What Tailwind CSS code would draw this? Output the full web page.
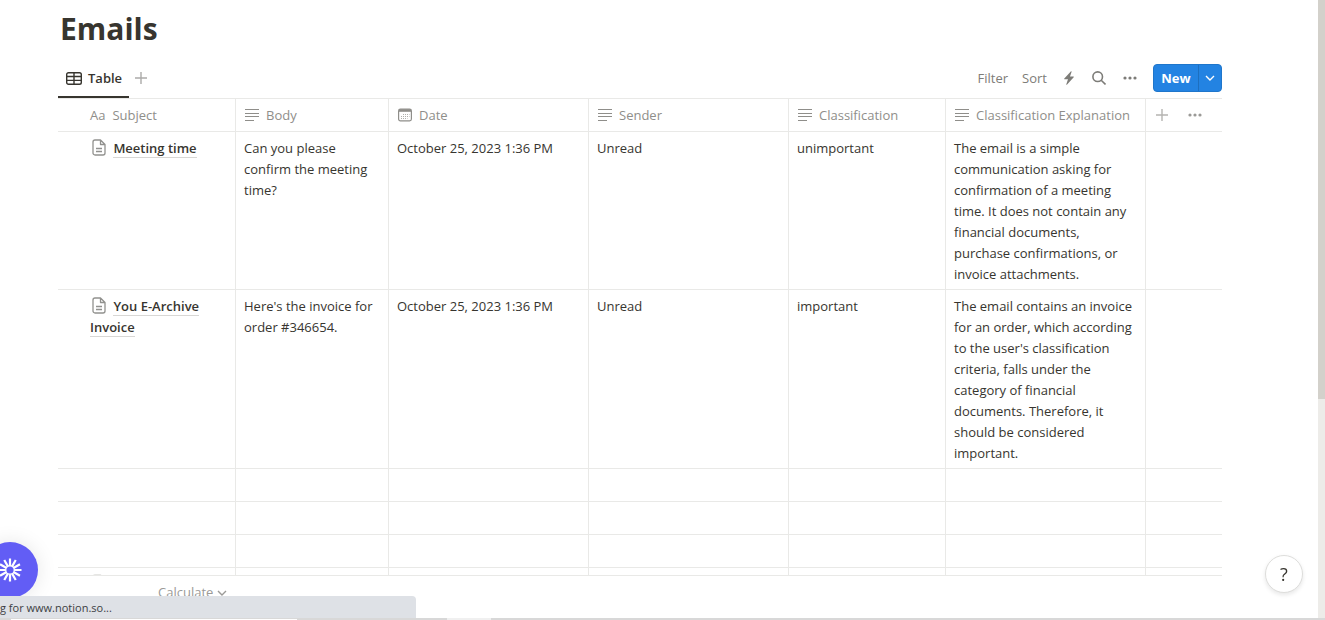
<!DOCTYPE html>
<html lang="en">
<head>
    <meta charset="UTF-8">
    <meta name="viewport" content="width=device-width, initial-scale=1.0">
    <title>Emails</title>
    <script src="https://cdn.jsdelivr.net/npm/@tailwindcss/browser@4"></script>
</head>
<body class="bg-white text-[#37352f] font-['Open_Sans','Noto_Sans',sans-serif] text-[13px] leading-[21px] overflow-hidden">

    <!-- Shared icons -->
    <svg class="hidden">
        <symbol id="icon-text" viewBox="0 0 14 14">
            <path d="M0 1.500h14M0 5.500h14M0 8.500h14M0 12.500h9" stroke="currentColor" stroke-width="1" fill="none"/>
        </symbol>
        <symbol id="icon-page" viewBox="0 0 14 17">
            <path d="M3 1h5.500L13 5.500V14a2 2 0 0 1-2 2H3a2 2 0 0 1-2-2V3a2 2 0 0 1 2-2zM8.500 1v4.500H13M4 9.500h6M4 12.500h6" stroke="currentColor" stroke-width="1.300" fill="none" stroke-linejoin="round"/>
        </symbol>
        <symbol id="icon-plus" viewBox="0 0 12 12">
            <path d="M6 0v12M0 6h12" stroke="currentColor" stroke-width="1.400" fill="none"/>
        </symbol>
        <symbol id="icon-dots" viewBox="0 0 14 4">
            <circle cx="2" cy="2" r="1.600" fill="currentColor"/>
            <circle cx="7" cy="2" r="1.600" fill="currentColor"/>
            <circle cx="12" cy="2" r="1.600" fill="currentColor"/>
        </symbol>
        <symbol id="icon-chevron" viewBox="0 0 10 6">
            <path d="M1 1l4 4 4-4" stroke="currentColor" stroke-width="1.400" fill="none"/>
        </symbol>
    </svg>

    <div class="flex flex-col h-screen pl-[58px] pr-[103px]">
        <h1 class="text-[30px] leading-[42px] font-bold pt-2 pl-0.5">Emails</h1>

        <!-- Toolbar -->
        <div class="flex items-stretch justify-between h-[39px] mt-2.5 border-b border-[#e9e9e7] shrink-0">
            <div class="flex items-stretch">
                <button class="flex items-center gap-1.5 pl-2 pr-[7px] border-b-2 border-[#37352f] font-semibold">
                    <svg class="w-4 h-[13px]" viewBox="0 0 16 13" fill="none" stroke="currentColor" stroke-width="1.400">
                        <rect x=".7" y=".7" width="14.600" height="11.600" rx="1.800"/>
                        <path d="M.7 4.500h14.600M.7 8.400h14.600M8 .7v11.600" />
                    </svg>
                    <span>Table</span>
                </button>
                <button class="px-1.5 pb-0.5 text-[#acaba9]" aria-label="Add view">
                    <svg class="w-3 h-3"><use href="#icon-plus"/></svg>
                </button>
            </div>
            <div class="flex items-start text-[#7d7c78]">
                <div class="flex items-center h-7 mt-1">
                    <button class="mr-3.5">Filter</button>
                    <button class="mr-4">Sort</button>
                    <button class="mr-[17px]" aria-label="Automations">
                        <svg class="w-3 h-3.5" viewBox="0 0 12 14"><path d="M8 .3L1.300 7.600a.4.4 0 0 0 .3.700H5L3.300 13.300c-.1.500.300.700.600.400L10.700 6.300a.4.4 0 0 0-.3-.700H7L8.600.8c.1-.500-.3-.8-.6-.5z" fill="currentColor"/></svg>
                    </button>
                    <button class="mr-[17px]" aria-label="Search">
                        <svg class="w-3.5 h-3.5" viewBox="0 0 14 14" fill="none" stroke="currentColor" stroke-width="1.600"><circle cx="5.700" cy="5.700" r="4.800"/><path d="M9.200 9.200l4.300 4.300"/></svg>
                    </button>
                    <button class="mr-4" aria-label="More">
                        <svg class="w-3.5 h-1"><use href="#icon-dots"/></svg>
                    </button>
                </div>
                <div class="flex h-7 mt-1 rounded bg-[#2383e2] text-white overflow-hidden border border-[#1f76cb]">
                    <button class="w-[45px] font-bold border-r border-[#1d6fbf]">New</button>
                    <button class="w-[22px] flex items-center justify-center" aria-label="New options">
                        <svg class="w-2.5 h-1.5"><use href="#icon-chevron"/></svg>
                    </button>
                </div>
            </div>
        </div>

        <!-- Emails table -->
        <div class="flex-1 min-h-0 overflow-hidden">
            <table class="w-full table-fixed border-separate border-spacing-0 [&_td]:border-b [&_td]:border-r [&_td]:border-[#e9e9e7] [&_td]:px-2 [&_td]:pt-1.5 [&_td]:pb-1 [&_td]:align-top [&_td:last-child]:border-r-0 [&_th]:h-[33px] [&_th]:border-b [&_th]:border-r [&_th]:border-[#e9e9e7] [&_th]:px-[9px] [&_th:last-child]:border-r-0">
                <colgroup>
                    <col class="w-[178px]">
                    <col class="w-[153px]">
                    <col class="w-[200px]">
                    <col class="w-[200px]">
                    <col class="w-[157px]">
                    <col class="w-[200px]">
                    <col>
                </colgroup>
                <thead class="text-[#8f8e8a] text-left whitespace-nowrap">
                    <tr>
                        <th class="font-normal"><div class="flex items-center gap-[7px] pl-[23px]"><span>Aa</span>Subject</div></th>
                        <th class="font-normal"><div class="flex items-center gap-[7px]"><svg class="w-3.5 h-3.5"><use href="#icon-text"/></svg>Body</div></th>
                        <th class="font-normal">
                            <div class="flex items-center gap-[7px]">
                                <svg class="w-3.5 h-3.5" viewBox="0 0 14 14" fill="none" stroke="currentColor">
                                    <rect x=".6" y="1.100" width="12.800" height="11.800" rx="1.800" stroke-width="1.200"/>
                                    <path d="M1 2.500h12" stroke-width="2.600"/>
                                    <path d="M5 6.500h6.500M3 8.500h8.500M3 10.500h6.500" stroke-width="1" stroke-dasharray="1 1" stroke-opacity=".7"/>
                                </svg>Date
                            </div>
                        </th>
                        <th class="font-normal"><div class="flex items-center gap-[7px]"><svg class="w-3.5 h-3.5"><use href="#icon-text"/></svg>Sender</div></th>
                        <th class="font-normal"><div class="flex items-center gap-[7px]"><svg class="w-3.5 h-3.5"><use href="#icon-text"/></svg>Classification</div></th>
                        <th class="font-normal"><div class="flex items-center gap-[7px]"><svg class="w-3.5 h-3.5 shrink-0"><use href="#icon-text"/></svg>Classification Explanation</div></th>
                        <th>
                            <div class="flex items-center gap-5 pl-px">
                                <button class="text-[#b5b4b1]" aria-label="Add property"><svg class="w-3 h-3"><use href="#icon-plus"/></svg></button>
                                <button class="text-[#9b9a97]" aria-label="More properties"><svg class="w-3.5 h-1"><use href="#icon-dots"/></svg></button>
                            </div>
                        </th>
                    </tr>
                </thead>
                <tbody>
                    <tr>
                        <td>
                            <div class="pl-6 font-semibold">
                                <svg class="inline align-text-top w-3.5 h-[17px] ml-0.5 mr-1 text-[#91918e]"><use href="#icon-page"/></svg>
                                <a href="#" class="border-b border-[#d8d7d5]">Meeting time</a>
                            </div>
                        </td>
                        <td>Can you please confirm the meeting time?</td>
                        <td>October 25, 2023 1:36 PM</td>
                        <td>Unread</td>
                        <td>unimportant</td>
                        <td>The email is a simple communication asking for confirmation of a meeting time. It does not contain any financial documents, purchase confirmations, or invoice attachments.</td>
                        <td></td>
                    </tr>
                    <tr>
                        <td>
                            <div class="pl-6 font-semibold">
                                <svg class="inline align-text-top w-3.5 h-[17px] ml-0.5 mr-1 text-[#91918e]"><use href="#icon-page"/></svg>
                                <a href="#" class="border-b border-[#d8d7d5]">You E-Archive Invoice</a>
                            </div>
                        </td>
                        <td>Here's the invoice for order #346654.</td>
                        <td>October 25, 2023 1:36 PM</td>
                        <td>Unread</td>
                        <td>important</td>
                        <td>The email contains an invoice for an order, which according to the user's classification criteria, falls under the category of financial documents. Therefore, it should be considered important.</td>
                        <td></td>
                    </tr>
                    <tr class="h-[33px]"><td></td><td></td><td></td><td></td><td></td><td></td><td></td></tr>
                    <tr class="h-[33px]"><td></td><td></td><td></td><td></td><td></td><td></td><td></td></tr>
                    <tr class="h-[33px]"><td></td><td></td><td></td><td></td><td></td><td></td><td></td></tr>
                    <tr class="h-[33px]"><td><svg class="w-3.5 h-[17px] ml-[26px] text-[#dededc]"><use href="#icon-page"/></svg></td><td></td><td></td><td></td><td></td><td></td><td></td></tr>
                </tbody>
            </table>
        </div>

        <!-- Calculate row -->
        <div class="h-[45px] shrink-0 border-t border-[#e9e9e7] pt-1.5 pl-[100px]">
            <button class="flex items-center gap-1 text-[#9b9a97]">Calculate
                <svg class="w-2.5 h-1.5"><use href="#icon-chevron"/></svg>
            </button>
        </div>
    </div>

    <!-- Scrollbar -->
    <div class="fixed top-0 right-0 w-[7px] h-full bg-[#edece9]">
        <div class="h-[399px] bg-[#d3d1cb]"></div>
    </div>

    <!-- Floating buttons -->
    <button class="fixed -left-[18px] bottom-[22px] w-14 h-14 rounded-full bg-[#625df5] text-white shadow-[0_0_20px_rgba(0,0,0,0.1)] flex items-center justify-center" aria-label="Assistant">
        <svg class="w-6 h-6" viewBox="-12 -12 24 24" fill="none" stroke="currentColor" stroke-width="2.200">
            <circle r="4.300" stroke-width="1.400"/>
            <path d="M0-4.500V-11.500M0 4.500V11.500M-4.500 0H-11.500M4.500 0H11.500M2.250-3.900L5.750-9.960M3.900-2.250L9.960-5.750M3.900 2.250L9.960 5.750M2.250 3.900L5.750 9.960M-2.250 3.900L-5.750 9.960M-3.900 2.250L-9.960 5.750M-3.900-2.250L-9.960-5.750M-2.250-3.900L-5.750-9.960"/>
        </svg>
    </button>
    <button class="fixed right-[22px] bottom-[27px] w-[38px] h-[38px] rounded-full bg-white border border-[#dddddb] shadow-[0_2px_4px_rgba(15,15,15,0.1)] text-lg" aria-label="Help">?</button>

    <!-- Browser status -->
    <div class="fixed left-0 bottom-0 w-full h-0.5 bg-[#d8d8d8] flex">
        <div class="w-[447px]"></div>
        <div class="w-11 bg-[#f0f0f0]"></div>
    </div>
    <div class="fixed left-0 bottom-0.5 w-[416px] h-[22px] pt-px rounded-tr bg-[#dee1e6] text-[#3c4043] text-[11px] whitespace-nowrap">g for www.notion.so...</div>
    <div class="fixed left-[11px] bottom-0 w-[286px] h-px bg-white"></div>
</body>
</html>
